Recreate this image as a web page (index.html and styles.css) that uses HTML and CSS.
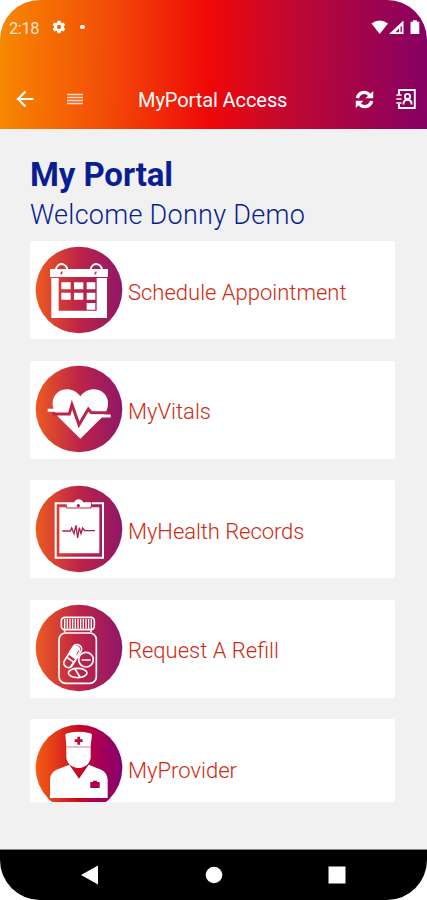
FILE: index.html
```html
<!DOCTYPE html>
<html lang="en">
<head>
<meta charset="utf-8">
<title>MyPortal Access</title>
<link rel="stylesheet" href="styles.css">
</head>
<body>
<div class="phone">
  <header class="header">
    <div class="status">
      <span class="time">2:18</span>
      <svg class="gear" viewBox="0 0 24 24"><path fill="#fff" fill-rule="evenodd" d="M19.1 12.9a7 7 0 0 0 0-1.8l2-1.6a.5.5 0 0 0 .1-.6l-1.9-3.300a.5.5 0 0 0-.6-.2l-2.400 1a7 7 0 0 0-1.600-1l-.4-2.500a.5.5 0 0 0-.5-.4h-3.800a.5.5 0 0 0-.5.4l-.3 2.500a7 7 0 0 0-1.600 1l-2.400-1a.5.5 0 0 0-.6.2L2.700 8.900a.5.5 0 0 0 .1.6l2 1.600a7 7 0 0 0 0 1.800l-2 1.600a.5.5 0 0 0-.1.6l1.900 3.300c.1.2.4.3.6.2l2.400-1a7 7 0 0 0 1.600 1l.4 2.500c0 .3.200.4.500.4h3.800c.3 0 .5-.1.500-.4l.4-2.500a7 7 0 0 0 1.600-1l2.400 1c.2.1.5 0 .6-.2l1.900-3.300a.5.5 0 0 0-.1-.6zM12 15.200a3.200 3.200 0 1 1 0-6.400 3.200 3.200 0 0 1 0 6.400z"/></svg>
      <span class="dot"></span>
      <svg class="signals" viewBox="0 0 50 16"><g fill="#fff"><path d="M.5 3.500Q8.500-2.500 17 3.500L8.700 14z"/><path fill-rule="evenodd" d="M18 14 32.500.5V14zM24.500 12.300h3.500V8.500zM29.500 7v5.300h1.300V5.500z"/><path d="M39.500 1.800h2.400V.3h4v1.500h2.400V14h-8.800z"/></g></svg>
    </div>
    <div class="toolbar">
      <svg class="back" viewBox="0 0 18 18"><path d="M17.500 9H2M9.500 1.500 2 9l7.500 7.500" fill="none" stroke="#fff" stroke-width="2.200"/></svg>
      <svg class="menu" viewBox="0 0 16 12"><path d="M0 1.500h16M0 4.500h16M0 7.500h16M0 10.500h16" stroke="#ffd9d0" stroke-width="1.600"/></svg>
      <h1 class="title">MyPortal Access</h1>
      <svg class="sync" viewBox="0 0 20 20"><g fill="none" stroke="#fff" stroke-width="3.600"><path d="M2.500 8.500C4 2 11.500.500 15.500 5.500"/><path d="M17.500 11.500C16 18 8.500 19.500 4.500 14.500"/></g><path fill="#fff" d="M19.200 1v7.800H11zM.8 19v-7.800H9z"/></svg>
      <svg class="contact" viewBox="0 0 20 20"><g fill="none" stroke="#fff" stroke-width="1.900"><path d="M3 5V1h15.800v18H3v-4"/><path d="M.3 6h5.200M.3 10h5.200M.3 14h5.200" stroke-width="1.600"/><circle cx="11.500" cy="7.500" r="2.600"/><path d="M7.400 15.500c0-3 1.500-4.800 4.100-4.800s4.100 1.800 4.100 4.800"/></g></svg>
    </div>
  </header>

  <main class="content">
    <h2 class="heading">My Portal</h2>
    <p class="welcome">Welcome Donny Demo</p>

    <div class="cards">
      <a class="card">
        <svg class="icon" viewBox="31 34 264 264">
          <defs><linearGradient id="brand" x1="0" y1="0" x2="1" y2="0"><stop offset="0" stop-color="#ed5a20"/><stop offset=".5" stop-color="#bd2448"/><stop offset="1" stop-color="#8f1768"/></linearGradient></defs>
          <circle cx="163" cy="166" r="130" fill="url(#brand)"/>
          <g fill="none" stroke="#fff" stroke-width="6"><path d="M94 103a17 17 0 1 1 32 10M198 103a17 17 0 1 1 32 10"/></g>
          <path fill="#fff" d="M76 103h174v24H76z"/>
          <path fill="#fff" fill-rule="evenodd" d="M80 130h167v120H80zM102 130v98h114v-98z"/>
          <path stroke="#bd2448" stroke-width="4" d="m108 119 5-8m97 8 5-8"/>
          <path fill="#fff" d="M110 143h28v21h-28zm38 0h28v21h-28zm38 0h26v21h-26zM110 174h28v21h-28zm38 0h28v21h-28zm38 0h26v21h-26zM186 205h26v20h-26z"/>
        </svg>
        <span class="label l1">Schedule Appointment</span>
      </a>
      <a class="card">
        <svg class="icon" viewBox="31 34 264 264">
          <circle cx="163" cy="166" r="130" fill="url(#brand)"/>
          <path fill="#fff" d="M167 255 101 190C78 165 79 133 98 117c21-16 51-13 69 11 18-24 48-27 69-11 19 16 20 48-3 73z"/>
          <path fill="none" stroke="#b7254b" stroke-width="9" d="M84 181h50l8-28 21 60 28-47 9 11h50"/>
          <path fill="none" stroke="#fff" stroke-width="9" d="M69 170h58M198 187h60"/>
        </svg>
        <span class="label l2">MyVitals</span>
      </a>
      <a class="card">
        <svg class="icon" viewBox="31 31 264 264">
          <circle cx="163" cy="163" r="130" fill="url(#brand)"/>
          <path fill="none" stroke="#fff" stroke-width="6" d="M128 86H93v163h142V86h-34"/>
          <path fill="#fff" d="M104 98h120v138H104zM126 99V83h23c2-12 24-12 26 0h24v16z"/>
          <path fill="none" stroke="#bd2448" stroke-width="3" d="M126 94v6h73v-6"/>
          <circle cx="161" cy="93" r="5" fill="#b7254b"/>
          <path fill="none" stroke="#a92050" stroke-width="4" d="M113 169h24l4-9 7 17 6-25 5 38 5-31 5 18 5-17 6 8h31"/>
        </svg>
        <span class="label l3">MyHealth Records</span>
      </a>
      <a class="card">
        <svg class="icon" viewBox="31 29 264 264">
          <circle cx="163" cy="161" r="130" fill="url(#brand)"/>
          <g fill="none" stroke="#fff" stroke-width="5">
            <rect x="110" y="69" width="99" height="37" rx="10"/>
            <path stroke-width="4" d="M120 74v29m8-29v29m8-29v29m8-29v29m8-29v29m8-29v29m8-29v29m8-29v29m8-29v29m8-29v29m8-29v29"/>
            <path d="M120 108v6m79-6v6"/><rect x="103" y="116" width="112" height="151" rx="20"/>
            <rect x="108" y="174" width="76" height="27" rx="13" transform="rotate(-58 143 188)"/>
            <circle cx="184" cy="196" r="22"/><path d="M171 197h27"/>
            <ellipse cx="159" cy="236" rx="28" ry="14"/><path d="m151 224 15 24M128 190l20 14M139 216l13-18"/>
          </g>
          <path fill="#fff" d="m130 179 12-20c8-12 31-4 23 13l-12 24z"/>
          <path stroke="#b7254b" stroke-width="3" d="m156 181 6-12"/>
        </svg>
        <span class="label l4">Request A Refill</span>
      </a>
      <a class="card last">
        <svg class="icon" viewBox="31 36 264 264">
          <defs><linearGradient id="vivid"><stop offset="0" stop-color="#f45c13"/><stop offset=".22" stop-color="#e43b18"/><stop offset=".5" stop-color="#c70824"/><stop offset=".72" stop-color="#a90053"/><stop offset="1" stop-color="#85006f"/></linearGradient></defs>
          <circle cx="163" cy="168" r="130" fill="url(#vivid)"/>
          <path fill="#fff" d="M76 258v-51c0-22 10-31 27-37l31-12 29 42 29-42 30 12c17 6 27 15 27 37v51z"/>
          <path fill="#fff" d="M122 68q2-4 9-5 31-7 62 0 7 1 9 5l-4 34v34c0 17-17 32-36 32s-37-15-37-32v-34z"/>
          <path stroke="#d78390" stroke-width="3" d="M126 105h72"/>
          <path stroke="#c40a32" stroke-width="8" d="M162 74v24m-12-12h24"/>
          <path fill="#ad0044" d="M197 210h8v-4h12v4h8v18h-28z"/>
        </svg>
        <span class="label l5">MyProvider</span>
      </a>
    </div>
  </main>

  <nav class="nav">
    <svg viewBox="0 0 18 20"><path fill="#fff" d="M17 .500v19L0 10z"/></svg>
    <svg viewBox="0 0 18 20"><circle cx="9" cy="10" r="8.300" fill="#fff"/></svg>
    <svg viewBox="0 0 18 20"><path fill="#fff" d="M.5 1.500h17v17H.5z"/></svg>
  </nav>
</div>
</body>
</html>
```
FILE: styles.css
```css
* { box-sizing: border-box; }
body { margin: 0; background: #fff; font-family: Roboto, "Liberation Sans", sans-serif; }
svg { display: block; flex: none; }
h1, h2, p { margin: 0; white-space: nowrap; }

.phone {
  width: 427px; height: 900px;
  display: flex; flex-direction: column;
  overflow: hidden; border-radius: 40px;
  background: #f1f1f1;
}

.header {
  height: 128.5px; flex: none; color: #fff;
  background: linear-gradient(91deg, #f78800 0%, #f24d08 25%, #ef0808 49%, #c20830 67%, #850064 100%);
}
.status { display: flex; align-items: center; height: 54px; padding-left: 9px; }
.time { width: 42px; margin-top: 2px; font-size: 16.5px; letter-spacing: -.4px; color: #ffe5d5; }
.gear { width: 16px; height: 16px; }
.dot { width: 4.5px; height: 4.5px; margin-left: 13px; border-radius: 50%; background: #fff; }
.signals { width: 50px; height: 16px; margin-left: 286px; margin-top: 2px; }

.toolbar { display: flex; align-items: center; height: 74px; padding: 16px 0 0 16px; }
.back { width: 18px; height: 18px; }
.menu { width: 16px; height: 12px; margin-left: 33px; }
.title { width: 149px; margin: 1px 0 0 55px; font-size: 20px; font-weight: 400; line-height: 28px; letter-spacing: -.08px; }
.sync { width: 19px; height: 19px; margin-left: 68px; }
.contact { width: 20px; height: 20px; margin-left: 22px; }

.content { flex: 1; padding: 26px 32px 0 30px; color: #0b1e91; }
.heading { font-size: 33px; font-weight: 700; line-height: 40px; letter-spacing: -.1px; }
.welcome { height: 46.5px; font-size: 27px; font-weight: 300; line-height: 40px; letter-spacing: .28px; }
.cards { display: flex; flex-direction: column; gap: 21.500px; }
.card {
  display: flex; align-items: flex-start;
  height: 98px; padding: 4.700px 0 0 5.300px;
  overflow: hidden; border-radius: 2px; background: #fff;
}
.icon { width: 88px; height: 88px; }
.last { height: 83px; }
.label {
  margin-left: 4.700px; line-height: 93px; white-space: nowrap;
  font-size: 22px; font-weight: 300; color: #cf2a12;
}
.l3 { letter-spacing: -.06px; }

.nav {
  display: flex; align-items: center; justify-content: space-between;
  height: 51.500px; padding: 0 81px; border-top: 1px solid #888; background: #000;
}
.nav svg { width: 18px; height: 20px; }
```
